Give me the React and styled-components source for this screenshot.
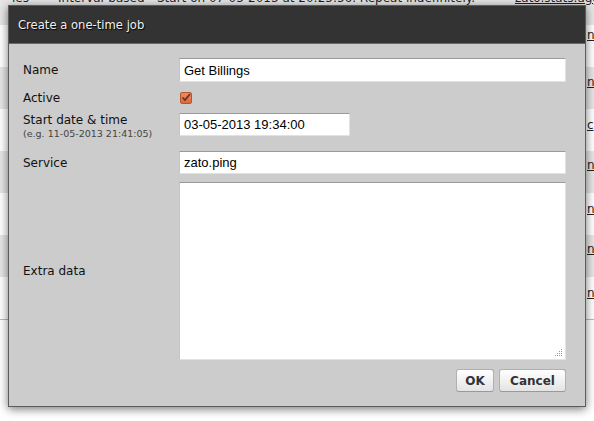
import React from "react";
import styled, { createGlobalStyle } from "styled-components";

const GlobalStyle = createGlobalStyle`
  html, body {
    margin: 0;
    padding: 0;
    background: #fff;
    overflow: hidden;
  }
  body {
    font-family: "DejaVu Sans", Verdana, sans-serif;
    font-size: 12px;
    color: #222;
  }
`;

const Page = styled.div`
  position: relative;
  width: 594px;
  height: 421px;
  overflow: hidden;
`;

const Backdrop = styled.div`
  margin-top: -17px;
  border-bottom: 1px solid #bbb;
`;

const BackRow = styled.div`
  display: flex;
  height: 42px;
  box-sizing: border-box;
  padding-top: ${(p) => p.$pad}px;
  background: ${(p) => (p.$odd ? "#e6e6e6" : "#fff")};
  line-height: 14px;
  white-space: nowrap;
`;

const BackCell = styled.div`
  flex: 0 0 ${(p) => p.$w}px;
  overflow: hidden;
`;

const BackLink = styled.a`
  color: #222;
  text-decoration: underline;
`;

const Dialog = styled.div`
  position: absolute;
  left: 8px;
  top: 5px;
  width: 578px;
  height: 402px;
  box-sizing: border-box;
  border: 1px solid #5c5c5c;
  background: #cccccc;
  box-shadow: 0 2px 9px rgba(0, 0, 0, 0.55);
  display: flex;
  flex-direction: column;
`;

const Header = styled.div`
  height: 37px;
  flex: 0 0 auto;
  background: #333333;
  border-bottom: 1px solid #6a6a6a;
  display: flex;
  align-items: center;
  padding-left: 9px;
  color: #f0f0f0;
  font-size: 11.6px;
  text-shadow: 1px 1px 1px #000;
`;

const Body = styled.div`
  padding: 14px 19px 0 14px;
  display: flex;
  flex-direction: column;
`;

const Row = styled.div`
  display: grid;
  grid-template-columns: 156px 1fr;
  align-items: ${(p) => p.$align || "center"};
  height: ${(p) => p.$h}px;
  margin-bottom: ${(p) => p.$mb || 0}px;
`;

const Label = styled.div`
  color: #111;
  font-size: 12px;
  line-height: 14px;
`;

const Hint = styled.div`
  color: #444;
  font-size: 9.5px;
  line-height: 12px;
  margin-top: 1px;
`;

const Input = styled.input`
  box-sizing: border-box;
  width: ${(p) => p.$w || "100%"};
  height: ${(p) => p.$h}px;
  margin: 0;
  padding: 0 4px;
  background: #fff;
  border: 1px solid #e2e2e2;
  border-top-color: #9a9a9a;
  border-left-color: #c4c4c4;
  font-family: "Liberation Sans", Arial, sans-serif;
  font-size: 13px;
  color: #000;
  outline: none;
`;

const AreaWrap = styled.div`
  position: relative;
  height: 100%;
`;

const Area = styled.textarea`
  box-sizing: border-box;
  display: block;
  width: 100%;
  height: 100%;
  margin: 0;
  resize: none;
  background: #fff;
  border: 1px solid #e2e2e2;
  border-top-color: #9a9a9a;
  border-left-color: #c4c4c4;
  outline: none;
`;

const Grip = styled.svg`
  position: absolute;
  right: 3px;
  bottom: 3px;
`;

const Check = styled.span`
  display: inline-flex;
  align-items: center;
  justify-content: center;
  width: 12px;
  height: 12px;
  margin-left: 1px;
  box-sizing: border-box;
  border: 1px solid #b4552f;
  border-radius: 2px;
  background: linear-gradient(#f08a5f, #e0673c);
`;

const Actions = styled.div`
  display: flex;
  justify-content: flex-end;
  gap: 5px;
  margin-top: 9px;
`;

const Button = styled.button`
  height: 23px;
  width: ${(p) => p.$w}px;
  box-sizing: border-box;
  padding: 0;
  border: 1px solid #b0b0b0;
  border-bottom-color: #999;
  border-radius: 3px;
  background: linear-gradient(#ffffff, #e4e4e4);
  font-family: "DejaVu Sans", Verdana, sans-serif;
  font-weight: bold;
  font-size: 12px;
  color: #333;
`;

const rows = [
  { pad: 8, cells: ["ies", "Interval-based", "Start on 07-05-2013 at 20:25:56. Repeat indefinitely."], link: "zato.stats.aggregate" },
  { pad: 3, link: "n" },
  { pad: 8, link: "n" },
  { pad: 9, link: "c" },
  { pad: 7, link: "n" },
  { pad: 9, link: "n" },
  { pad: 7, link: "n" },
  { pad: 9, link: "n" },
];

export default function App() {
  return (
    <Page>
      <GlobalStyle />
      <Backdrop>
        {rows.map((r, i) => (
          <BackRow key={i} $odd={i % 2 === 0} $pad={r.pad}>
            <BackCell $w={12} />
            <BackCell $w={46}>{r.cells ? r.cells[0] : ""}</BackCell>
            <BackCell $w={99}>{r.cells ? r.cells[1] : ""}</BackCell>
            <BackCell $w={r.cells ? 358 : 430}>{r.cells ? r.cells[2] : ""}</BackCell>
            <BackCell $w={200}>
              <BackLink>{r.link}</BackLink>
            </BackCell>
          </BackRow>
        ))}
      </Backdrop>

      <Dialog>
        <Header>Create a one-time job</Header>
        <Body>
          <Row $h={24} $mb={8}>
            <Label>Name</Label>
            <Input $h={24} defaultValue="Get Billings" />
          </Row>
          <Row $h={16} $mb={7}>
            <Label>Active</Label>
            <div>
              <Check>
                <svg width="10" height="9" viewBox="0 0 10 9">
                  <path d="M1.5 4.5 L4 7 L9 1" fill="none" stroke="#5b3327" strokeWidth="1.6" />
                </svg>
              </Check>
            </div>
          </Row>
          <Row $h={27} $mb={11} $align="start">
            <div>
              <Label>Start date &amp; time</Label>
              <Hint>(e.g. 11-05-2013 21:41:05)</Hint>
            </div>
            <Input $h={23} $w="171px" defaultValue="03-05-2013 19:34:00" />
          </Row>
          <Row $h={23} $mb={8}>
            <Label>Service</Label>
            <Input $h={23} defaultValue="zato.ping" />
          </Row>
          <Row $h={178}>
            <Label>Extra data</Label>
            <AreaWrap>
              <Area />
              <Grip width="9" height="9" viewBox="0 0 9 9">
                {[
                  [7, 1], [7, 3], [5, 3], [7, 5], [5, 5], [3, 5], [7, 7], [5, 7], [3, 7], [1, 7],
                ].map(([x, y], i) => (
                  <rect key={i} x={x} y={y} width="1" height="1" fill="#999" />
                ))}
              </Grip>
            </AreaWrap>
          </Row>
          <Actions>
            <Button $w={38}>OK</Button>
            <Button $w={67}>Cancel</Button>
          </Actions>
        </Body>
      </Dialog>
    </Page>
  );
}
